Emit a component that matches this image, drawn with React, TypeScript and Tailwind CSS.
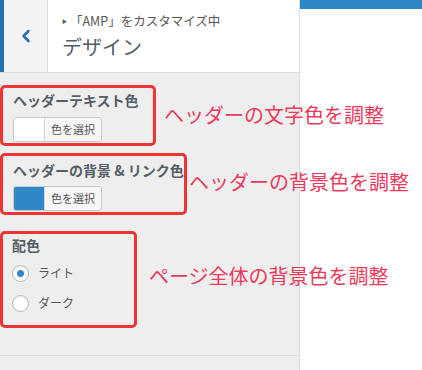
import { ChevronLeft } from "lucide-react";

const jp = { fontFamily: '"Noto Sans CJK JP", "Noto Sans", sans-serif' };

const ColorPicker = ({ swatch }: { swatch: string }) => (
  <div className="flex h-[25px] w-[89px] overflow-hidden rounded-[3px] border border-[#c9c9c9] bg-[#f7f7f7]">
    <div className={`w-[31px] shrink-0 ${swatch} border-r border-[#d5d5d5]`} />
    <div className="flex flex-1 items-center justify-center whitespace-nowrap text-[11px] text-[#555]">色を選択</div>
  </div>
);

const Radio = ({ label, checked }: { label: string; checked?: boolean }) => (
  <label className="flex items-center gap-[9px] whitespace-nowrap">
    <span className="flex h-[17px] w-[17px] shrink-0 items-center justify-center rounded-full border border-[#b4b9be] bg-white shadow-[inset_0_1px_2px_rgba(0,0,0,0.1)]">
      {checked && <span className="h-[7px] w-[7px] rounded-full bg-[#2e88c7]" />}
    </span>
    <span className="text-[12px] leading-[18px] text-[#555]">{label}</span>
  </label>
);

const Note = ({ children }: { children: string }) => (
  <span className="relative z-10 whitespace-nowrap text-[20px] leading-none text-[#ea3b5d]">{children}</span>
);

const App = () => {
  return (
    <div className="flex h-[370px] w-[422px] overflow-hidden bg-white" style={jp}>
      <div className="relative z-10 flex w-[300px] shrink-0 flex-col border-r border-[#dcdcdc] bg-[#eeeeee]">
        <div className="flex h-[73px] shrink-0 border-b border-[#dddddd] bg-white">
          <div className="flex w-[48px] items-center justify-center border-l-4 border-r border-l-[#2271b1] border-r-[#dddddd] bg-[#f3f3f5]">
            <ChevronLeft size={20} strokeWidth={3} className="text-[#2271b1]" />
          </div>
          <div className="flex flex-col pl-[14px] pt-[12px]">
            <div className="flex items-center whitespace-nowrap text-[12.5px] leading-[18px] text-[#555]">
              <span className="mr-[3px] text-[5px]">▶</span>「AMP」をカスタマイズ中
            </div>
            <div className="mt-[3px] text-[20px] leading-[28px] text-[#555d66]">デザイン</div>
          </div>
        </div>

        <div className="mt-[12px] flex items-center gap-[8px]">
          <div className="flex h-[61px] w-[156px] shrink-0 flex-col rounded-[5px] border-[3px] border-[#ee3535] pl-[10px] pt-[2px]">
            <div className="whitespace-nowrap text-[14px] font-bold leading-[20px] text-[#555d66]">ヘッダーテキスト色</div>
            <div className="mt-[7px]"><ColorPicker swatch="bg-white" /></div>
          </div>
          <div className="mt-[1px]"><Note>ヘッダーの文字色を調整</Note></div>
        </div>

        <div className="mt-[7px] flex items-center gap-[2px]">
          <div className="flex h-[62px] w-[187px] shrink-0 flex-col rounded-[5px] border-[3px] border-[#ee3535] pl-[10px] pt-[4px]">
            <div className="whitespace-nowrap text-[14px] font-bold leading-[20px] text-[#555d66]">ヘッダーの背景 &amp; リンク色</div>
            <div className="mt-[6px]"><ColorPicker swatch="bg-[#2e88c7]" /></div>
          </div>
          <div className="-mt-[3px]"><Note>ヘッダーの背景色を調整</Note></div>
        </div>

        <div className="mt-[16px] flex items-center gap-[12px]">
          <div className="flex h-[97px] w-[137px] shrink-0 flex-col rounded-[5px] border-[3px] border-[#ee3535] pl-[9px] pt-[1px]">
            <div className="text-[14px] font-bold leading-[20px] text-[#555d66]">配色</div>
            <div className="mt-[9px] flex flex-col gap-[12px]">
              <Radio label="ライト" checked />
              <Radio label="ダーク" />
            </div>
          </div>
          <div className="-mt-[5px]"><Note>ページ全体の背景色を調整</Note></div>
        </div>

        <div className="mt-[27px] border-t border-[#dcdcdc]" />
      </div>
      <div className="flex-1">
        <div className="h-[9px] bg-[#2e88c7]" />
      </div>
    </div>
  );
};

export default App;
